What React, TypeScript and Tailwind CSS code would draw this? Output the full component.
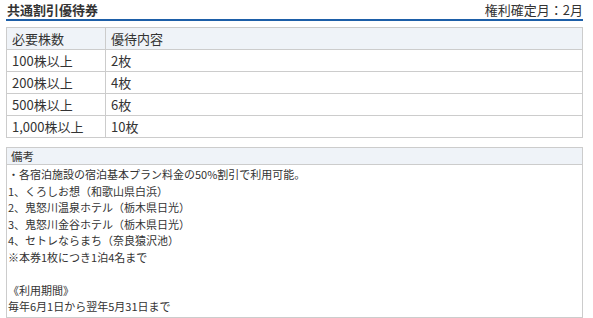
export default function App() {
    const rows = [
        { shares: '100株以上', benefit: '2枚' },
        { shares: '200株以上', benefit: '4枚' },
        { shares: '500株以上', benefit: '6枚' },
        { shares: '1,000株以上', benefit: '10枚' },
    ];

    const notes = [
        '・各宿泊施設の宿泊基本プラン料金の50%割引で利用可能。',
        '1、くろしお想（和歌山県白浜）',
        '2、鬼怒川温泉ホテル（栃木県日光）',
        '3、鬼怒川金谷ホテル（栃木県日光）',
        '4、セトレならまち（奈良猿沢池）',
        '※本券1枚につき1泊4名まで',
        '',
        '《利用期間》',
        '毎年6月1日から翌年5月31日まで',
    ];

    return (
        <div className="min-h-screen bg-white text-[#333] font-['Noto_Sans_CJK_JP','Noto_Sans',sans-serif]">
            <div className="ml-[6px] w-[577px]">
                <div className="flex justify-between items-center border-b-[2px] border-[#1d5fa8]">
                    <h2 className="pl-[1px] text-[13px] leading-[19px] font-bold">共通割引優待券</h2>
                    <span className="text-[13px] leading-[19px]">権利確定月：2月</span>
                </div>

                <table className="mt-[6px] w-full border-collapse text-[13px]">
                    <thead>
                        <tr className="bg-[#eff3f8]">
                            <th className="w-[99px] h-[22px] border border-[#cccccc] px-[5px] text-left font-normal leading-none">必要株数</th>
                            <th className="h-[22px] border border-[#cccccc] px-[5px] text-left font-normal leading-none">優待内容</th>
                        </tr>
                    </thead>
                    <tbody>
                        {rows.map((row) => (
                            <tr key={row.shares}>
                                <td className="h-[22px] border border-[#cccccc] px-[5px] leading-none">{row.shares}</td>
                                <td className="h-[22px] border border-[#cccccc] px-[5px] leading-none">{row.benefit}</td>
                            </tr>
                        ))}
                    </tbody>
                </table>

                <div className="mt-[9px] border border-[#cccccc]">
                    <div className="h-[17px] bg-[#eff3f8] border-b border-[#cccccc] px-[4px] text-[11.5px] leading-[17px]">備考</div>
                    <div className="px-[1px] pt-[1px] pb-[2px] text-[11px] leading-[16.5px]">
                        {notes.map((line, i) => (
                            <div key={i} className="h-[16.5px]">{line}</div>
                        ))}
                    </div>
                </div>
            </div>
        </div>
    );
}
